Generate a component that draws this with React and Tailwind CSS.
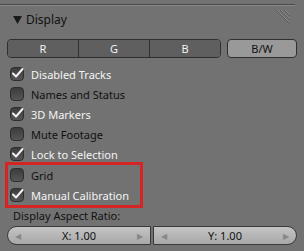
import { useState } from "react";

const Check = ({ checked }) => (
  <span className="w-[14px] h-[14px] rounded-[4px] bg-gradient-to-b from-[#3c3c3c] to-[#565656] border border-[#2e2e2e] flex items-center justify-center shrink-0">
    {checked && (
      <svg width="13" height="13" viewBox="0 0 13 13" className="-mt-[2px] -mr-[1px]">
        <path d="M2 6.5 L5 9.5 L11.5 2" stroke="#f2f2f2" strokeWidth="2" fill="none" strokeLinecap="round" strokeLinejoin="round" />
      </svg>
    )}
  </span>
);

const Row = ({ label, checked, pad = "pl-[10px]" }) => (
  <div className={`flex items-center gap-[7px] h-[20px] whitespace-nowrap ${pad}`}>
    <Check checked={checked} />
    <span className={checked ? "text-[#f4f4f4]" : "text-[#111]"}>{label}</span>
  </div>
);

const App = () => {
  const [canal] = useState("B/W");

  return (
    <div className="w-[304px] h-[251px] bg-[#727272] overflow-hidden text-[11px] leading-none" style={{ fontFamily: '"Noto Sans", sans-serif' }}>
      <div className="mt-[4px] mr-[9px] h-[2px] border-t border-[#4a4a4a] border-b border-b-[#8a8a8a]" />
      <div className="relative flex items-center h-[27px] pl-[13px] text-[12px] text-[#111]">
        <svg width="9" height="8" viewBox="0 0 9 8" className="mr-[4px]">
          <path d="M0 0 H9 L4.5 8 Z" fill="#1a1a1a" />
        </svg>
        Display
        <svg width="20" height="20" viewBox="0 0 20 20" className="absolute right-[12px] top-[2px]">
          <path d="M4 2 L18 16 M8 2 L18 12 M12 2 L18 8" stroke="#5a5a5a" strokeWidth="1" />
          <path d="M5 2 L18 15 M9 2 L18 11 M13 2 L18 7" stroke="#888" strokeWidth="1" />
        </svg>
      </div>

      <div className="flex mt-[6px] mx-[7px] h-[19px]">
        <div className="flex flex-1 mr-[6px] rounded-[4px] border border-[#2f2f2f] overflow-hidden">
          {["R", "G", "B"].map((c, i) => (
            <div key={c} className={`flex-1 flex items-center justify-center bg-[#5f5f5f] text-[#f2f2f2] ${i > 0 ? "border-l border-[#2f2f2f]" : ""}`}>
              {c}
            </div>
          ))}
        </div>
        <div className={`w-[70px] flex items-center justify-center rounded-[4px] border border-[#2f2f2f] ${canal === "B/W" ? "bg-[#999999] text-[#111]" : "bg-[#5f5f5f] text-white"}`}>
          B/W
        </div>
      </div>

      <div className="mt-[6px]">
        <Row label="Disabled Tracks" checked />
        <Row label="Names and Status" />
        <Row label="3D Markers" checked />
        <Row label="Mute Footage" />
        <Row label="Lock to Selection" checked />
        <div className="ml-[5px] w-[138px] border-[3px] border-[#d42424] -mt-[2px]">
          <Row label="Grid" pad="pl-[2px]" />
          <Row label="Manual Calibration" checked pad="pl-[2px]" />
        </div>
      </div>

      <div className="pl-[13px] h-[15px] flex items-center text-[#111]">Display Aspect Ratio:</div>

      <div className="flex mx-[7px] mt-[3px] h-[19px] gap-[2px] text-[#111]">
        {[["X", "rounded-l-full"], ["Y", "rounded-r-full"]].map(([eje, r]) => (
          <div key={eje} className={`flex-1 flex items-center justify-between px-[7px] bg-gradient-to-b from-[#c4c4c4] to-[#a8a8a8] border border-[#3a3a3a] ${r}`}>
            <span className="text-[8px] text-[#888]">◀</span>
            <span>{eje}: 1.00</span>
            <span className="text-[8px] text-[#888]">▶</span>
          </div>
        ))}
      </div>
    </div>
  );
};

export default App;
